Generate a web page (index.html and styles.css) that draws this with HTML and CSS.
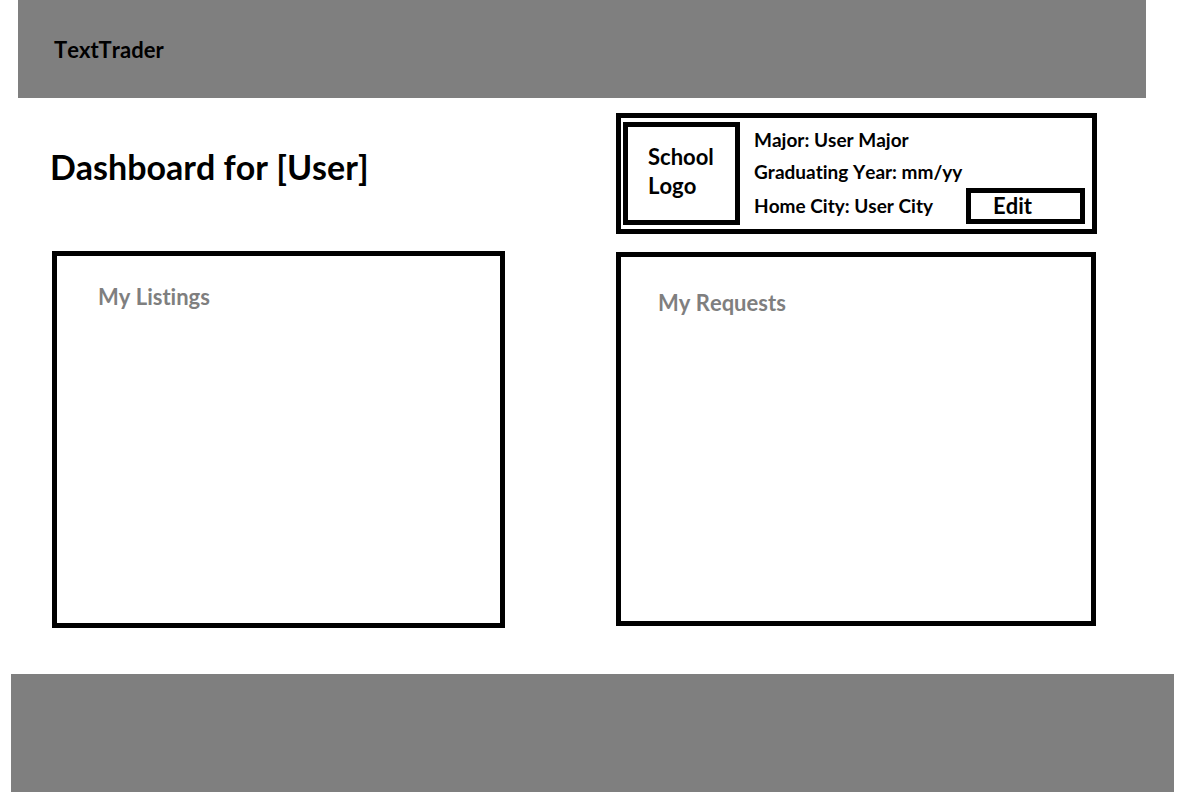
FILE: index.html
```html
<!DOCTYPE html>
<html lang="en">
<head>
<meta charset="utf-8">
<meta name="viewport" content="width=device-width, initial-scale=1">
<title>TextTrader</title>
<link rel="stylesheet" href="styles.css">
</head>
<body>
<header class="site-header">TextTrader</header>
<main class="dashboard">
  <div class="column column-left">
    <h1 class="page-title">Dashboard for [User]</h1>
    <section class="panel panel-listings">
      <h2 class="panel-title">My Listings</h2>
    </section>
  </div>
  <div class="column column-right">
    <section class="profile">
      <div class="school-logo">School<br>Logo</div>
      <div class="details">
        <p class="detail">Major: User Major</p>
        <p class="detail">Graduating Year: mm/yy</p>
        <div class="detail-row">
          <p class="detail">Home City: User City</p>
          <button class="edit-button" type="button">Edit</button>
        </div>
      </div>
    </section>
    <section class="panel panel-requests">
      <h2 class="panel-title">My Requests</h2>
    </section>
  </div>
</main>
<footer class="site-footer"></footer>
</body>
</html>
```

FILE: styles.css
```css
* {
  box-sizing: border-box;
}

body {
  display: flex;
  flex-direction: column;
  min-height: 100vh;
  margin: 0;
  padding-bottom: 2px;
  background: #fff;
  color: #000;
  font-family: Lato, Carlito, Calibri, sans-serif;
  font-size: 22px;
  font-weight: 700;
  font-kerning: none;
  font-variant-ligatures: none;
}

h1,
h2,
p {
  margin: 0;
  font-weight: 700;
}

.site-header {
  display: flex;
  align-items: center;
  min-height: 98px;
  margin: 0 36px 0 18px;
  padding: 0 36px;
  background: #7f7f7f;
}

.dashboard {
  flex: 1;
  display: grid;
  grid-template-columns: 455fr 481fr;
  gap: 111px;
  padding: 15px 85px 46px 50px;
}

.column {
  display: flex;
  flex-direction: column;
}

.page-title {
  min-height: 138px;
  padding-top: 34px;
  font-size: 34px;
  line-height: 40px;
}

.panel {
  flex: 1;
  border: 5px solid #000;
}

.panel-listings {
  margin-left: 2px;
  padding: 28px 41px;
}

.panel-requests {
  margin: 18px 1px 2px 0;
  padding: 33px 37px;
}

.panel-title {
  color: #7f7f7f;
  font-size: 22px;
  line-height: 26px;
}

.profile {
  display: flex;
  gap: 14px;
  padding: 4px 7px 4px 2px;
  border: 5px solid #000;
}

.school-logo {
  flex: 0 0 117px;
  padding: 15px 20px 20px;
  border: 5px solid #000;
  line-height: 29px;
}

.details {
  flex: 1;
  padding-top: 2px;
}

.detail {
  font-size: 19px;
  line-height: 32px;
  white-space: nowrap;
}

.detail-row {
  display: flex;
  align-items: center;
  justify-content: space-between;
}

.edit-button {
  width: 119px;
  height: 36px;
  padding: 0 22px;
  border: 5px solid #000;
  background: #fff;
  color: inherit;
  font: inherit;
  font-kerning: none;
  line-height: 26px;
  text-align: left;
}

.site-footer {
  min-height: 118px;
  margin: 0 8px 0 11px;
  background: #7f7f7f;
}
```
